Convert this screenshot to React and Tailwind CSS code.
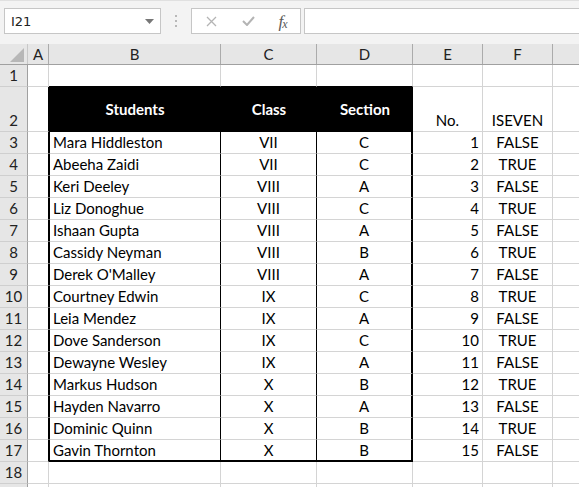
import React from 'react';

const rows = [
  ['Mara Hiddleston', 'VII', 'C', 1, 'FALSE'],
  ['Abeeha Zaidi', 'VII', 'C', 2, 'TRUE'],
  ['Keri Deeley', 'VIII', 'A', 3, 'FALSE'],
  ['Liz Donoghue', 'VIII', 'C', 4, 'TRUE'],
  ['Ishaan Gupta', 'VIII', 'A', 5, 'FALSE'],
  ['Cassidy Neyman', 'VIII', 'B', 6, 'TRUE'],
  ["Derek O'Malley", 'VIII', 'A', 7, 'FALSE'],
  ['Courtney Edwin', 'IX', 'C', 8, 'TRUE'],
  ['Leia Mendez', 'IX', 'A', 9, 'FALSE'],
  ['Dove Sanderson', 'IX', 'C', 10, 'TRUE'],
  ['Dewayne Wesley', 'IX', 'A', 11, 'FALSE'],
  ['Markus Hudson', 'X', 'B', 12, 'TRUE'],
  ['Hayden Navarro', 'X', 'A', 13, 'FALSE'],
  ['Dominic Quinn', 'X', 'B', 14, 'TRUE'],
  ['Gavin Thornton', 'X', 'B', 15, 'FALSE'],
];

function Toolbar() {
  return (
    <div className="h-[44px] bg-[#f3f3f3] border-t border-[#e0e0e0] flex items-start pt-[7px] pl-[4px]">
      <div className="w-[157px] h-[26px] bg-white border border-[#c6c6c6] flex items-center justify-between pl-[6px] pr-[6px] text-[14px] text-[#222] font-['DejaVu_Sans',sans-serif]">
        <span className="text-[13px]">I21</span>
        <svg width="9" height="5" viewBox="0 0 9 5"><path d="M0 0h9L4.5 5z" fill="#777" /></svg>
      </div>
      <div className="w-[30px] h-[26px] flex flex-col items-center justify-center gap-[3px]">
        <span className="w-[2px] h-[2px] bg-[#b8b8b8]" />
        <span className="w-[2px] h-[2px] bg-[#b8b8b8]" />
        <span className="w-[2px] h-[2px] bg-[#b8b8b8]" />
      </div>
      <div className="w-[110px] h-[26px] bg-white border border-[#c6c6c6] flex items-center">
        <div className="w-[38px] flex justify-center">
          <svg width="11" height="11" viewBox="0 0 11 11"><path d="M1 1l9 9M10 1l-9 9" stroke="#b4b4b4" strokeWidth="1.3" /></svg>
        </div>
        <div className="w-[36px] flex justify-center">
          <svg width="13" height="10" viewBox="0 0 13 10"><path d="M1 5l4 4 7-8" stroke="#b4b4b4" strokeWidth="2" fill="none" /></svg>
        </div>
        <div className="w-[34px] flex justify-center items-end text-[#5a5a5a] font-['Liberation_Serif',serif] italic leading-none">
          <span className="text-[17px]">f</span><span className="text-[12px] -ml-[1px]">x</span>
        </div>
      </div>
      <div className="flex-1 ml-[3px] h-[26px] bg-white border border-[#c6c6c6] border-r-0" />
    </div>
  );
}

function ColHeader() {
  const letters = ['A', 'B', 'C', 'D', 'E', 'F'];
  const widths = ['w-[21px]', 'w-[172px]', 'w-[96px]', 'w-[96px]', 'w-[70px]', 'w-[70px]'];
  return (
    <div className="h-[21px] flex bg-[#e6e6e6] border-b border-[#a0a0a0] text-[#222] text-[15px]">
      <div className="w-[28px] shrink-0 border-r border-[#c8c8c8] flex items-end justify-end pr-[3px] pb-[2px]">
        <svg width="14" height="14" viewBox="0 0 14 14"><path d="M14 0v14H0z" fill="#b7b7b7" /></svg>
      </div>
      {letters.map((l, i) => (
        <div key={l} className={`${widths[i]} shrink-0 border-r border-[#ababab] flex items-center justify-center`}>{l}</div>
      ))}
      <div className="flex-1" />
    </div>
  );
}

function RowNum({ n, tall }) {
  return (
    <div className={`w-[28px] shrink-0 bg-[#e6e6e6] border-r border-b border-r-[#a0a0a0] border-b-[#cfcfcf] flex justify-center text-[#222] ${tall ? 'items-end pb-[3px]' : 'items-center'}`}>
      {n}
    </div>
  );
}

function DataRow({ n, r, last }) {
  const bb = last ? 'border-b-2 border-b-black' : 'border-b border-b-[#d4d4d4]';
  return (
    <div className="h-[22px] flex">
      <RowNum n={n} />
      <div className="w-[21px] shrink-0 border-r border-b border-r-black border-b-[#d4d4d4]" />
      <div className={`w-[172px] shrink-0 border-l border-r border-l-black border-r-black ${bb} flex items-center pl-[3px]`}>{r[0]}</div>
      <div className={`w-[96px] shrink-0 border-r border-r-black ${bb} flex items-center justify-center`}>{r[1]}</div>
      <div className={`w-[96px] shrink-0 border-r-2 border-r-black ${bb} flex items-center justify-center`}>{r[2]}</div>
      <div className="w-[70px] shrink-0 border-r border-b border-[#d4d4d4] flex items-center justify-end pr-[3px]">{r[3]}</div>
      <div className="w-[70px] shrink-0 border-r border-b border-[#d4d4d4] flex items-center justify-center">{r[4]}</div>
      <div className="flex-1 border-b border-[#d4d4d4]" />
    </div>
  );
}

function EmptyRow({ n }) {
  return (
    <div className="h-[22px] flex">
      <RowNum n={n} />
      <div className="w-[21px] shrink-0 border-r border-b border-[#d4d4d4]" />
      <div className="w-[172px] shrink-0 border-r border-b border-[#d4d4d4]" />
      <div className="w-[96px] shrink-0 border-r border-b border-[#d4d4d4]" />
      <div className="w-[96px] shrink-0 border-r border-b border-[#d4d4d4]" />
      <div className="w-[70px] shrink-0 border-r border-b border-[#d4d4d4]" />
      <div className="w-[70px] shrink-0 border-r border-b border-[#d4d4d4]" />
      <div className="flex-1 border-b border-[#d4d4d4]" />
    </div>
  );
}

export default function App() {
  return (
    <div className="w-[579px] h-[487px] overflow-hidden bg-white font-['Lato',sans-serif] text-[15px] text-black leading-none">
      <Toolbar />
      <ColHeader />

      {/* row 1 */}
      <div className="h-[22px] flex">
        <RowNum n={1} />
        <div className="w-[21px] shrink-0 border-r border-b border-[#d4d4d4]" />
        <div className="w-[172px] shrink-0 border-r border-b border-r-[#d4d4d4] border-b-black" />
        <div className="w-[96px] shrink-0 border-r border-b border-r-[#d4d4d4] border-b-black" />
        <div className="w-[96px] shrink-0 border-r border-b border-r-[#d4d4d4] border-b-black" />
        <div className="w-[70px] shrink-0 border-r border-b border-[#d4d4d4]" />
        <div className="w-[70px] shrink-0 border-r border-b border-[#d4d4d4]" />
        <div className="flex-1 border-b border-[#d4d4d4]" />
      </div>

      {/* row 2: header */}
      <div className="h-[45px] flex">
        <RowNum n={2} tall />
        <div className="w-[21px] shrink-0 border-r border-b border-r-black border-b-[#d4d4d4]" />
        <div className="w-[364px] shrink-0 bg-black flex text-white font-bold">
          <div className="w-[172px] flex items-center justify-center">Students</div>
          <div className="w-[96px] flex items-center justify-center">Class</div>
          <div className="w-[96px] flex items-center justify-center">Section</div>
        </div>
        <div className="w-[70px] shrink-0 border-r border-b border-[#d4d4d4] flex items-end justify-center pb-[3px]">No.</div>
        <div className="w-[70px] shrink-0 border-r border-b border-[#d4d4d4] flex items-end justify-center pb-[3px]">ISEVEN</div>
        <div className="flex-1 border-b border-[#d4d4d4]" />
      </div>

      {rows.map((r, i) => (
        <DataRow key={i} n={i + 3} r={r} last={i === rows.length - 1} />
      ))}

      <EmptyRow n={18} />
      <EmptyRow n="" />
    </div>
  );
}
